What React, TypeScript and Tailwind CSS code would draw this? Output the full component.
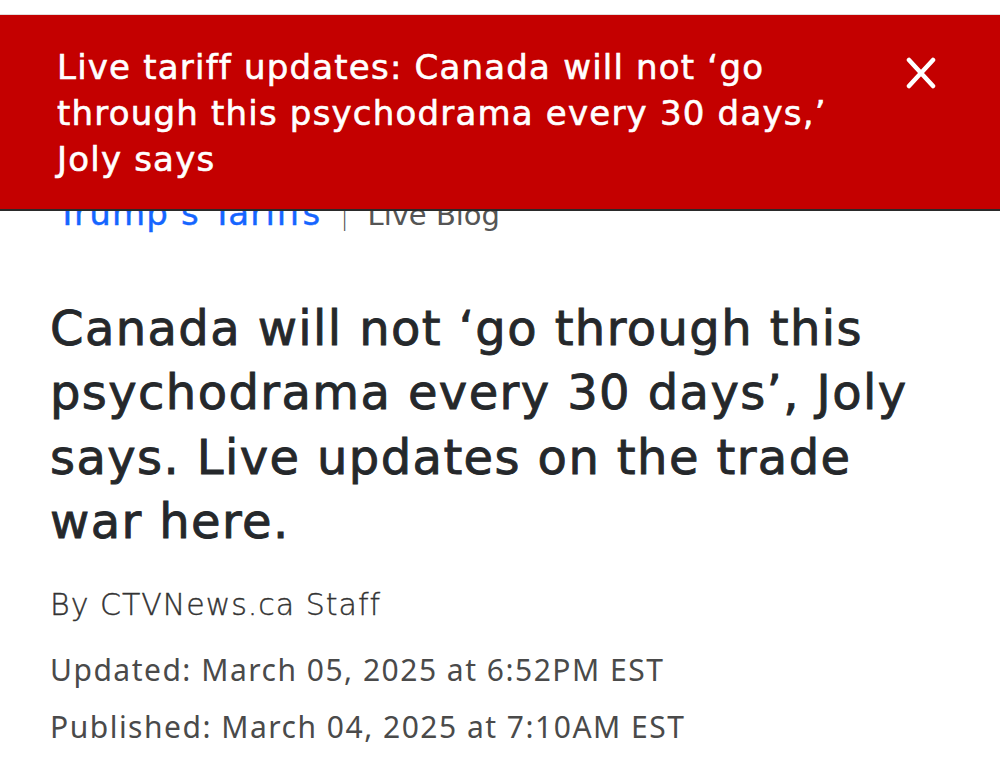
import React from "react";

const dv = { fontFamily: "'DejaVu Sans', 'Noto Sans', sans-serif" };

export default function App() {
  return (
    <div className="relative min-h-[771px] w-full overflow-hidden bg-white">
      {/* content in flow */}
      <div className="px-[50px] pt-[193px]">
        <div
          className="flex items-baseline whitespace-nowrap pl-[7px] text-[34px] leading-[1.2]"
          style={dv}
        >
          <span className="tracking-[1.2px] text-[#1565ff] [-webkit-text-stroke:0.4px_#1565ff]">
            Trump’s Tariffs
          </span>
          <span className="mx-[19px] text-[24px] font-light text-[#555]">|</span>
          <span className="text-[29px] font-normal text-[#555]">Live Blog</span>
        </div>
        <h1
          className="mt-[62px] whitespace-nowrap text-[48px] font-normal leading-[64.5px] tracking-[1.4px] text-[#25282b] [-webkit-text-stroke:0.9px_#25282b]"
          style={dv}
        >
          Canada will not ‘go through this
          <br />
          psychodrama every 30 days’, Joly
          <br />
          says. Live updates on the trade
          <br />
          war here.
        </h1>
        <div
          className="mt-[33px] text-[30px] font-light leading-[36px] tracking-[1px] text-[#333] [-webkit-text-stroke:0.4px_#333]"
          style={dv}
        >
          By CTVNews.ca Staff
        </div>
        <div
          className="mt-[29px] flex flex-col gap-[21px] text-[30px] leading-[36px] tracking-[1.5px] text-[#4a4a4a]"
          style={{ fontFamily: "'Noto Sans', Roboto, sans-serif" }}
        >
          <div>Updated: March 05, 2025 at 6:52PM EST</div>
          <div>Published: March 04, 2025 at 7:10AM EST</div>
        </div>
      </div>

      {/* overlay banner */}
      <div className="absolute inset-x-0 top-[14px] border-t border-[#e2dcdc] border-b-2 border-b-[#2a2a2a] bg-[#c40000]">
        <div className="flex items-start justify-between pl-[57px] pr-[64px] pt-[29px] pb-[27px]">
          <div
            className="whitespace-nowrap text-[34px] leading-[46px] tracking-[1.2px] text-white [-webkit-text-stroke:0.6px_white]"
            style={dv}
          >
            Live tariff updates: Canada will not ‘go
            <br />
            through this psychodrama every 30 days,’
            <br />
            Joly says
          </div>
          <svg
            width="30"
            height="32"
            viewBox="0 0 30 32"
            className="mt-[13px] shrink-0"
            fill="none"
            stroke="white"
            strokeWidth="4.5"
            strokeLinecap="round"
          >
            <path d="M3 3 L27 29 M27 3 L3 29" />
          </svg>
        </div>
      </div>
    </div>
  );
}
